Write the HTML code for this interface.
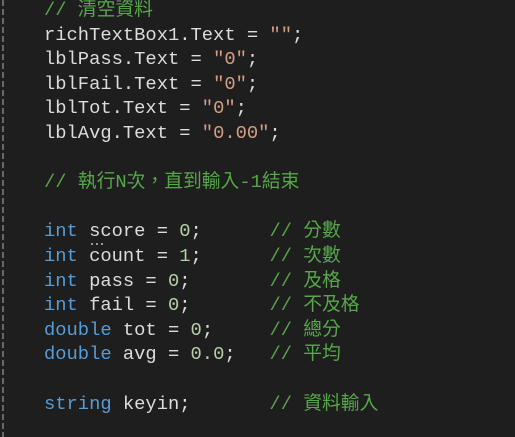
<!DOCTYPE html>
<html><head><meta charset="utf-8"><style>
html,body{margin:0;padding:0;background:#1e1e1e;width:515px;height:437px;overflow:hidden}
.g{position:absolute;left:2px;top:0;width:2px;height:437px;background:repeating-linear-gradient(#888 0 6px,transparent 6px 9px);opacity:.7}
pre{position:absolute;left:44px;top:-2px;margin:0;font-family:"Liberation Mono","Noto Sans CJK TC",monospace;font-size:18.8px;line-height:24.6px;color:#dcdcdc}
.c{color:#57a64a;font-family:"Liberation Mono","Noto Sans CJK TC",monospace}
.k{color:#569cd6}.s{color:#d69d85}.n{color:#b5cea8}
.d{position:relative}
.d:after{content:"";position:absolute;left:2px;bottom:-3px;width:14px;height:2px;background:repeating-linear-gradient(90deg,#999 0 2px,transparent 2px 5px)}
</style></head><body>
<div class="g"></div>
<pre><span class="c">// 清空資料</span>
richTextBox1.Text = <span class="s">""</span>;
lblPass.Text = <span class="s">"0"</span>;
lblFail.Text = <span class="s">"0"</span>;
lblTot.Text = <span class="s">"0"</span>;
lblAvg.Text = <span class="s">"0.00"</span>;

<span class="c">// 執行N次，直到輸入-1結束</span>

<span class="k">int</span> <span class="d">score</span> = <span class="n">0</span>;      <span class="c">// 分數</span>
<span class="k">int</span> count = <span class="n">1</span>;      <span class="c">// 次數</span>
<span class="k">int</span> pass = <span class="n">0</span>;       <span class="c">// 及格</span>
<span class="k">int</span> fail = <span class="n">0</span>;       <span class="c">// 不及格</span>
<span class="k">double</span> tot = <span class="n">0</span>;     <span class="c">// 總分</span>
<span class="k">double</span> avg = <span class="n">0.0</span>;   <span class="c">// 平均</span>

<span class="k">string</span> keyin;       <span class="c">// 資料輸入</span></pre>
</body></html>
